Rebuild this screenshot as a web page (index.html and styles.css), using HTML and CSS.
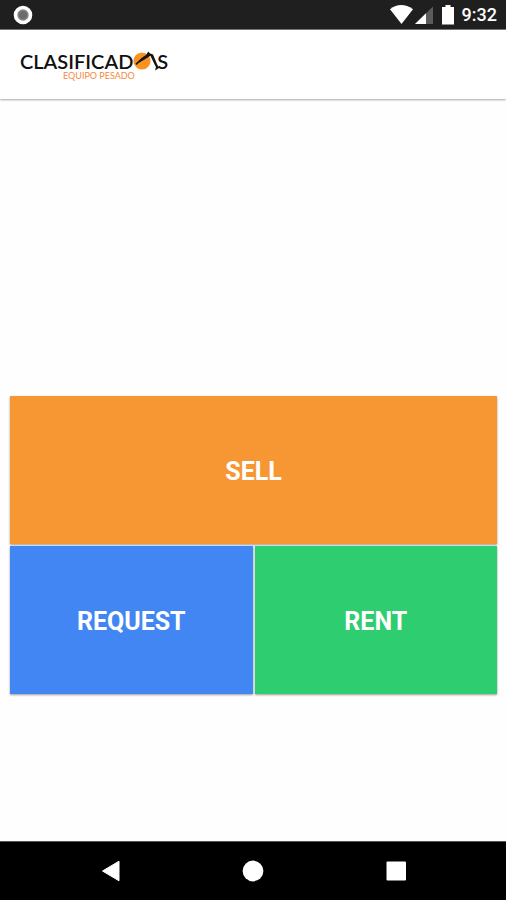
FILE: index.html
```html
<!DOCTYPE html>
<html lang="en">

<head>
    <meta charset="UTF-8">
    <meta name="viewport" content="width=device-width, initial-scale=1.0">
    <title>Clasificados Equipo Pesado</title>

    <link rel="stylesheet" href="styles.css">
</head>

<body>

    <div class="status-bar">
        <svg class="status-dot" width="20" height="20" viewBox="0 0 20 20">
            <circle cx="10" cy="10" r="7.5" fill="#858585" stroke="#fff" stroke-width="3.6" />
            <circle cx="10" cy="10" r="4" fill="#6c6c6c" />
        </svg>
        <div class="status-icons">
            <svg width="44" height="20" viewBox="0 0 44 20">
                <path d="M0 4.2Q11-4 23 4.2L11.5 19Z" fill="#fff" />
                <path d="M43 1.5V19H25Z" fill="#5c5c5c" />
                <path d="M36 8.3V19H25Z" fill="#fff" />
            </svg>
            <svg width="12" height="20" viewBox="0 0 12 20">
                <path d="M3.5 0h5v2H12v17.5H0V2h3.5Z" fill="#fff" />
            </svg>
            <span class="clock">9:32</span>
        </div>
    </div>

    <header class="header">
        <a href="#" class="logo">
            <span class="logo-name">CLASIFICAD<svg class="logo-mark" width="24" height="20" viewBox="0 0 24 20">
                    <circle cx="9" cy="10" r="8.6" fill="#f7931e" />
                    <path d="M3 13L9 6.8L13 4.2L15.2 0.5L16.8 2.2L20 3.4L24 13L26 17L22 19.5L23 16L21.6 13.6L17.4 4.8L12 8.2L6.2 11.6Z" fill="#171310" />
                    <path d="M3 13.4L7 9.5L13 5" fill="none" stroke="#171310" stroke-width="1.6" />
                </svg>S</span>
            <span class="logo-sub">EQUIPO PESADO</span>
        </a>
    </header>

    <main class="menu">
        <button class="tile sell">SELL</button>
        <button class="tile request">REQUEST</button>
        <button class="tile rent">RENT</button>
    </main>

    <nav class="nav-bar">
        <button aria-label="Back">
            <svg width="22" height="22" viewBox="0 0 22 22">
                <path d="M2.5 11L19 1.2V20.8Z" fill="#fff" stroke="#fff" stroke-linejoin="round" />
            </svg>
        </button>
        <button aria-label="Home">
            <svg width="22" height="22" viewBox="0 0 22 22">
                <circle cx="11" cy="11" r="10.4" fill="#fff" />
            </svg>
        </button>
        <button aria-label="Recent apps">
            <svg width="22" height="22" viewBox="0 0 22 22">
                <rect x="1.5" y="1.5" width="19.5" height="19" rx="1" fill="#fff" />
            </svg>
        </button>
    </nav>

</body>

</html>
```

FILE: styles.css
```css
*,
*::before,
*::after {
    margin: 0;
    padding: 0;
    box-sizing: border-box;
}

body {
    min-height: 100vh;
    display: flex;
    flex-direction: column;
    background-color: #fefefe;
    font-family: Roboto, sans-serif;
}

button {
    border: none;
    background: none;
    font-family: inherit;
    cursor: pointer;
}

svg {
    display: block;
}

/* status bar */
.status-bar {
    height: 30px;
    padding: 0 9px 0 13px;
    display: flex;
    justify-content: space-between;
    align-items: center;
    background-color: #1f1f1f;
    border-bottom: 1px solid #777;
}

.status-icons {
    display: flex;
    align-items: center;
    gap: 8px;
}

.clock {
    color: #fff;
    font-size: 18px;
    font-weight: 500;
    line-height: 20px;
}

/* header */
.header {
    height: 69px;
    padding: 21px 20px 0;
    background-color: #fff;
    box-shadow: 0 1px 2px rgba(0, 0, 0, 0.35);
    z-index: 1;
}

.logo {
    display: inline-flex;
    flex-direction: column;
    text-decoration: none;
    font-family: Lato, sans-serif;
}

.logo-name {
    display: flex;
    align-items: center;
    color: #111;
    font-size: 20px;
    font-weight: 600;
    line-height: 20px;
}

.logo-mark {
    overflow: visible;
}

.logo-sub {
    padding-left: 43px;
    color: #f58a3c;
    font-size: 9px;
    line-height: 10px;
}

/* tiles */
.menu {
    flex: 1;
    padding: 0 9px 147px 10px;
    display: grid;
    grid-template-columns: 1fr 1fr;
    grid-auto-rows: minmax(148px, auto);
    grid-gap: 2px;
    align-content: end;
}

.tile {
    padding-top: 2px;
    color: #fff;
    font-size: 25px;
    font-weight: 700;
    box-shadow: 0 1px 2px rgba(0, 0, 0, 0.4);
}

.sell {
    grid-column: 1 / 3;
    background-color: #f79734;
}

.request {
    background-color: #4286f4;
}

.rent {
    background-color: #2ecd70;
}

/* navigation bar */
.nav-bar {
    height: 59px;
    padding: 0 39px 0 40px;
    display: grid;
    grid-template-columns: repeat(3, 1fr);
    background-color: #000;
    border-top: 1px solid #555;
}

.nav-bar button {
    display: flex;
    justify-content: center;
    align-items: center;
}
```
